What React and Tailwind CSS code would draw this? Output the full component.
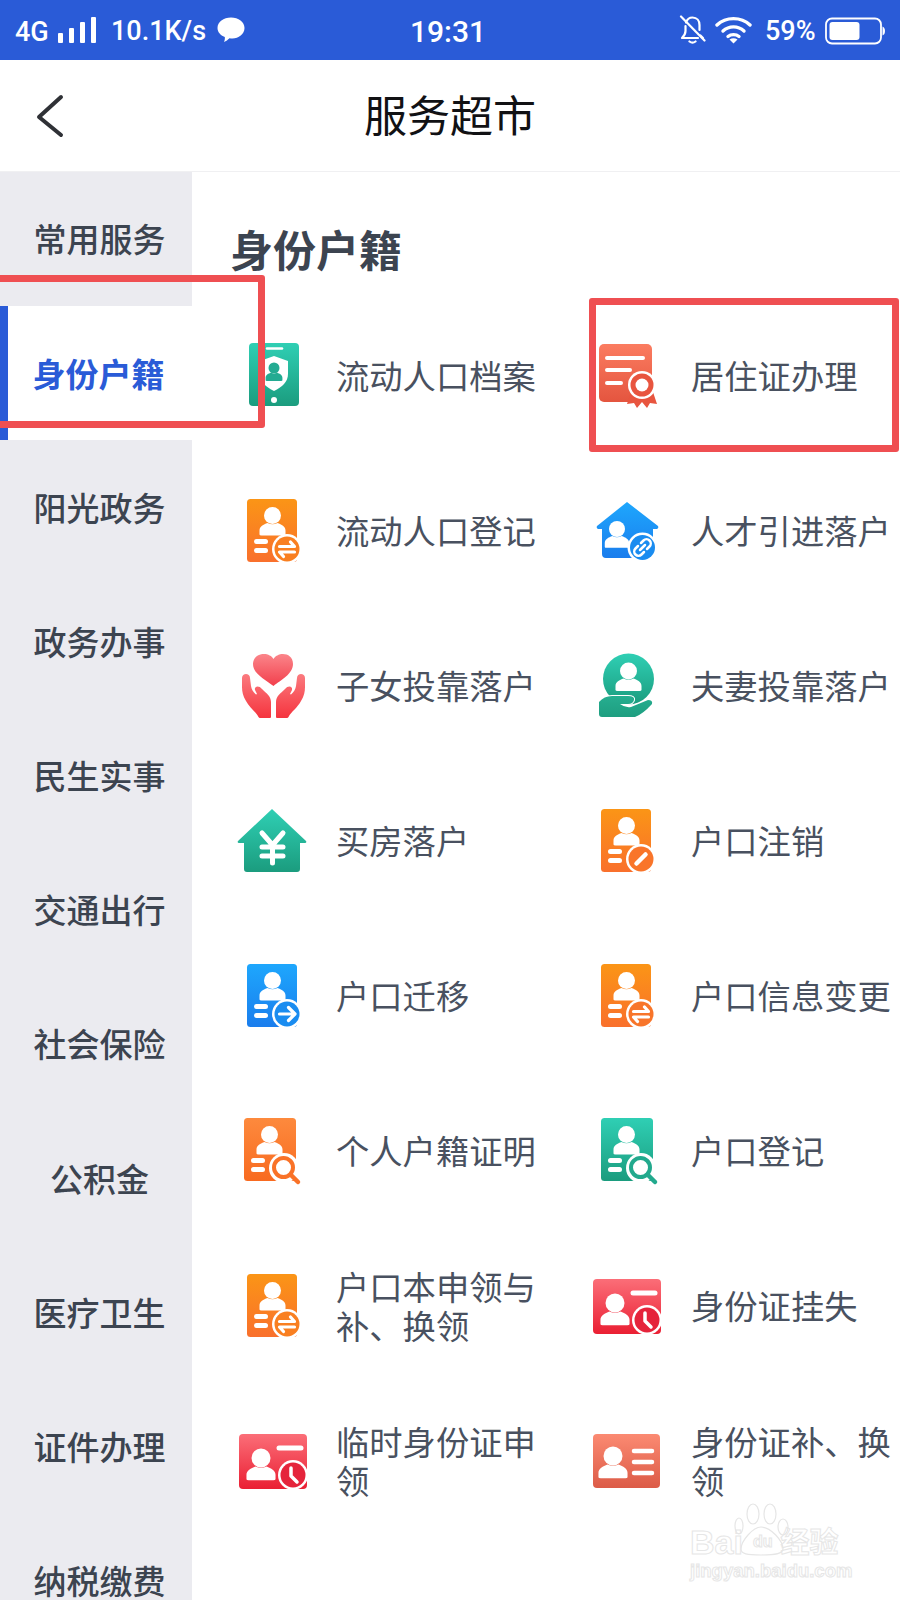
const sideItems = ['常用服务', '身份户籍', '阳光政务', '政务办事', '民生实事', '交通出行', '社会保险', '公积金', '医疗卫生', '证件办理', '纳税缴费'];

// head + shoulders used by most of the card icons
function Person({ x, y, r = 8.5, fill = 'white' }) {
  const k = r / 8.5;
  return (
    <g fill={fill} transform={`translate(${x} ${y}) scale(${k})`}>
      <circle cx="0" cy="0" r="8.5" />
      <path d="M-13 19v-4c0-4 4-6 8-7.500q5 2.500 10 0c4 1.500 8 3.500 8 7.500v4q0 1-2 1h-22q-2 0-2-1z" />
    </g>
  );
}

function Badge({ type, color, x = 51, y = 52 }) {
  if (type === 'search') {
    return (
      <g>
        <circle cx={x} cy={y} r="15" fill="white" />
        <circle cx={x - 0.500} cy={y - 0.500} r="9.500" fill="white" stroke={color} strokeWidth="4" />
        <path d={`M${x + 7} ${y + 7}L${x + 14} ${y + 14}`} stroke={color} strokeWidth="4.500" strokeLinecap="round" />
      </g>
    );
  }
  return (
    <g transform={`translate(${x} ${y})`}>
      <circle r="15" fill="white" />
      <circle r="12.500" fill={color} />
      {type === 'swap' && <path d="M-7.500 -2.500H7.500L3.500 -7M7.500 3H-7.500L-3.500 7.500" fill="none" stroke="white" strokeWidth="3.200" strokeLinecap="round" strokeLinejoin="round" />}
      {type === 'arrow' && <path d="M-7.500 0H7.500M1.500 -6.500L8 0L1.500 6.500" fill="none" stroke="white" strokeWidth="3.200" strokeLinecap="round" strokeLinejoin="round" />}
      {type === 'ban' && <path d="M-4.500 4.500L4.500 -4.500" stroke="white" strokeWidth="4.500" strokeLinecap="round" />}
      {type === 'clock' && <path d="M-2 -7V1L4 7" fill="none" stroke="white" strokeWidth="3.500" strokeLinecap="round" strokeLinejoin="round" />}
      {type === 'link' && <path d="M-1.500 -4.500L1 -7a3.500 3.500 0 0 1 6 6L4.500 1.500M1.500 4.500L-1 7a3.500 3.500 0 0 1 -6 -6L-4.500 -1.500M-2.500 2.500L2.500 -2.500" fill="none" stroke="white" strokeWidth="2.500" strokeLinecap="round" />}
    </g>
  );
}

function PersonCard({ grad, color, type, x = 11, y = 2, w = 50, h = 63 }) {
  return (
    <>
      <rect x={x} y={y} width={w} height={h} rx="3.500" fill={`url(#${grad})`} />
      <Person x={x + 25.500} y={y + 16.500} />
      <path d={`M${x + 9.500} ${y + 42.500}h9M${x + 9.500} ${y + 51.500}h9`} stroke="white" strokeWidth="5" strokeLinecap="round" />
      <Badge type={type} color={color} x={x + 40} y={y + 50} />
    </>
  );
}

function ClockCard({ x = 2 }) {
  return (
    <>
      <rect x={x} y="7" width="68" height="55" rx="4" fill="url(#red)" />
      <Person x={x + 22} y="31" r="9.500" />
      <path d={`M${x + 40} 21h22`} stroke="white" strokeWidth="5" strokeLinecap="round" />
      <Badge type="clock" color="#e5243b" x={x + 54} y="48" />
    </>
  );
}

function Icon({ name }) {
  let body = null;
  if (name === 'phone') {
    body = (
      <>
        <rect x="13" y="1" width="50" height="63" rx="4" fill="url(#teal)" />
        <path d="M31 6.500h15" stroke="white" strokeWidth="2.500" strokeLinecap="round" />
        <path d="M38 14l14 5v13c0 8-6 13-14 17c-8-4-14-9-14-17v-13z" fill="white" />
        <Person x="38" y="26" r="5.500" fill="#23ab92" />
        <circle cx="38" cy="58" r="3" fill="white" />
      </>
    );
  } else if (name === 'cert') {
    body = (
      <>
        <rect x="8" y="2" width="53" height="58" rx="5" fill="url(#coral)" />
        <path d="M16 16h36M16 28h23M16 41h14" stroke="white" strokeWidth="4" strokeLinecap="round" />
        <path d="M40 50L36 62L43 61L46 66L51 60L56 66L59 61L66 62L62 50Z" fill="#e8553f" />
        <circle cx="51" cy="43" r="14" fill="white" />
        <circle cx="51" cy="43" r="11.500" fill="#e8553f" />
        <circle cx="51" cy="43" r="6.500" fill="white" />
      </>
    );
  } else if (name === 'link') {
    body = (
      <>
        <path d="M36 5L67 29q1 2-1 3h-4v25q0 4-4 4h-43q-4 0-4-4v-25h-4q-2-1-1-3z" fill="url(#blue)" />
        <Person x="26" y="32" r="8" />
        <Badge type="link" color="#1a8cf0" x="51.500" y="50.500" />
      </>
    );
  } else if (name === 'hands') {
    body = (
      <>
        <path d="M37.500 34C30 28 17 22 17 12C17 5 23 2 28 2C32 2 36 4 37.500 7C39 4 43 2 47 2C52 2 57 5 57 12C57 22 45 28 37.500 34Z" fill="url(#heart)" />
        <path d="M6 26C6 20.500 14 20.500 14 26L15 34C15.500 37 17 40 20 42.500L21 42L19 38C18 34 23 33 26 37C30 41 35 44 35 50V65Q35 66 34 66H24Q23 66 22.500 65C20 60 13 55 10 49C7 44 6 40 6 35Z" fill="url(#hand-red)" />
        <path d="M6 26C6 20.500 14 20.500 14 26L15 34C15.500 37 17 40 20 42.500L21 42L19 38C18 34 23 33 26 37C30 41 35 44 35 50V65Q35 66 34 66H24Q23 66 22.500 65C20 60 13 55 10 49C7 44 6 40 6 35Z" fill="url(#hand-red)" transform="translate(75 0) scale(-1 1)" />
      </>
    );
  } else if (name === 'care') {
    body = (
      <>
        <circle cx="37.500" cy="27" r="25.500" fill="url(#teal)" />
        <Person x="37.500" y="19" r="8.500" />
        <path d="M8 50Q13 44 21 44H37Q44 44 43 48Q42 52 37 52H29Q34 56 40 55L57 48Q62 48 61 52Q52 62 44 65H11Q8 65 8 62Z" fill="url(#teal-dark)" stroke="white" strokeWidth="2" paintOrder="stroke" />
      </>
    );
  } else if (name === 'yuan') {
    body = (
      <>
        <path d="M36 2L70 34q1 2-1 2h-5v26q0 3-3 3h-50q-3 0-3-3v-26h-5q-2 0-1-2z" fill="url(#teal)" />
        <path d="M26 26L36.500 38L47 26M36.500 38V56M26 40H47M26 49H47" fill="none" stroke="white" strokeWidth="5" strokeLinecap="round" strokeLinejoin="round" />
      </>
    );
  } else if (name === 'idlines') {
    body = (
      <>
        <rect x="2" y="7" width="67" height="54" rx="4" fill="url(#salmon)" />
        <Person x="22" y="29" r="9.500" />
        <path d="M43 24h18M43 35h18M43 46h18" stroke="white" strokeWidth="4.500" strokeLinecap="round" />
      </>
    );
  } else if (name === 'clock1') {
    body = <ClockCard x={3} />;
  } else if (name === 'clock2') {
    body = <ClockCard x={2} />;
  } else if (name === 'swap') {
    body = <PersonCard grad="orange" color="#f97f20" type="swap" />;
  } else if (name === 'ban') {
    body = <PersonCard grad="orange" color="#f9752a" type="ban" x={10} />;
  } else if (name === 'swap2') {
    body = <PersonCard grad="orange" color="#f8752a" type="swap" x={10} />;
  } else if (name === 'arrow') {
    body = <PersonCard grad="blue" color="#1a8cf0" type="arrow" />;
  } else if (name === 'search-orange') {
    body = <PersonCard grad="orange2" color="#f97228" type="search" x={8} y={1} w={52} />;
  } else if (name === 'search-teal') {
    body = <PersonCard grad="teal" color="#22a98d" type="search" x={10} y={1} w={52} />;
  }
  return (
    <svg width="72" height="72" viewBox="0 0 72 72" className="shrink-0 overflow-visible">
      {body}
    </svg>
  );
}

const services = [
  ['phone', '流动人口档案'],
  ['cert', '居住证办理'],
  ['swap', '流动人口登记'],
  ['link', '人才引进落户'],
  ['hands', '子女投靠落户'],
  ['care', '夫妻投靠落户'],
  ['yuan', '买房落户'],
  ['ban', '户口注销'],
  ['arrow', '户口迁移'],
  ['swap2', '户口信息变更'],
  ['search-orange', '个人户籍证明'],
  ['search-teal', '户口登记'],
  ['swap', '户口本申领与补、换领'],
  ['clock2', '身份证挂失'],
  ['clock1', '临时身份证申领'],
  ['idlines', '身份证补、换领'],
];

function Gradient({ id, from, to }) {
  return (
    <linearGradient id={id} x1="0" y1="0" x2="0" y2="1">
      <stop offset="0" stopColor={from} />
      <stop offset="1" stopColor={to} />
    </linearGradient>
  );
}

function StatusBar() {
  return (
    <div className="h-[60px] bg-[#2a5bd7] flex items-center text-white text-[27px] font-medium font-['Roboto',sans-serif] pl-[15px]">
      <span className="w-[37px] pt-[4px]">4G</span>
      <svg width="38" height="26" viewBox="0 0 38 26" className="ml-[6px]" fill="white">
        <rect x="0" y="16" width="5" height="10" rx="1" />
        <rect x="11" y="11" width="5" height="15" rx="1" />
        <rect x="22" y="5" width="5" height="21" rx="1" />
        <rect x="33" y="0" width="5" height="26" rx="1" />
      </svg>
      <span className="ml-[15px] w-[96px] pt-[2px]">10.1K/s</span>
      <svg width="28" height="26" viewBox="0 0 28 26" className="ml-[10px]" fill="white">
        <path d="M14 0.500c7.500 0 13.500 4.500 13.500 10.500s-6 10.500-12 10.500c-1 0-2 0-3-.2c-1.500 1.500-3.500 3-5.500 3.700c.8-1.500 1-3.500.8-5c-4.500-1.800-7.300-5-7.300-9c0-6 6-10.500 13.500-10.500z" />
      </svg>
      <span className="ml-[165px] w-[82px] pt-[2px] text-[30px]">19:31</span>
      <svg width="27" height="30" viewBox="0 0 27 30" className="ml-[187px]" fill="none" stroke="white" strokeWidth="2.200" strokeLinecap="round" strokeLinejoin="round">
        <path d="M7 7.500C8 4.500 10.500 2.500 13.500 2.500C18 2.500 20.500 6 20.500 10V15" />
        <path d="M6.500 11V16C6.500 19 5 21 3 23H19" />
        <path d="M21.500 20.500L24 23" />
        <path d="M10.500 26.500Q13.500 28.800 16.500 26.500" />
        <path d="M2 1.500L25.500 25.500" />
      </svg>
      <svg width="37" height="28" viewBox="0 0 37 28" className="ml-[9px]" fill="none" stroke="white" strokeWidth="3.400" strokeLinecap="round">
        <path d="M2 9C11 0.500 26 0.500 35 9" />
        <path d="M8 15C14 9.500 23 9.500 29 15" />
        <path d="M13 20.500C16 18 21 18 24 20.500" />
        <path d="M18.500 27.500L14.500 23.500Q18.500 21 22.500 23.500Z" fill="white" stroke="none" />
      </svg>
      <span className="ml-[13px] w-[52px] pt-[2px]">59%</span>
      <svg width="60" height="28" viewBox="0 0 60 28" className="ml-[8px] mt-[1px]">
        <rect x="1" y="1.500" width="55" height="25" rx="6" fill="none" stroke="white" strokeWidth="1.800" />
        <rect x="4.500" y="5" width="30" height="18" rx="3" fill="white" />
        <path d="M57.500 9.500q2.500 1 2.500 4.500t-2.500 4.500z" fill="white" />
      </svg>
    </div>
  );
}

function Watermark() {
  return (
    <div className="absolute left-[690px] top-[1498px] w-[170px] text-transparent font-['Liberation_Sans',sans-serif] [-webkit-text-stroke:1px_#e6e6e6]">
      <svg width="60" height="56" viewBox="0 0 60 56" className="absolute left-[44px] top-[2px]" fill="none" stroke="#e6e6e6" strokeWidth="1.200">
        <ellipse cx="19" cy="14" rx="6" ry="10" />
        <ellipse cx="36" cy="14" rx="6" ry="10" />
        <ellipse cx="5" cy="26" rx="4" ry="8" />
        <ellipse cx="49" cy="27" rx="5" ry="8" />
        <path d="M27 27c-8 0-20 14-20 22c0 5 6 6 20 6s22-1 22-6c0-8-12-22-22-22z" />
      </svg>
      <div className="flex h-[32px] mt-[28px] text-[34px] leading-[32px] font-bold">
        <span>Bai</span>
        <span className="ml-[10px] mt-[4px] text-[16px] leading-[24px]">du</span>
        <span className="ml-[8px] text-[29px] leading-[28px] font-['Noto_Sans_CJK_SC',sans-serif]">经验</span>
      </div>
      <div className="text-[18.500px] leading-[22px] mt-[2px] font-bold">jingyan.baidu.com</div>
    </div>
  );
}

export default function App() {
  return (
    <div className="relative w-[900px] h-[1600px] overflow-hidden bg-white font-['Noto_Sans_CJK_SC',sans-serif]">
      <svg className="absolute w-0 h-0">
        <defs>
          <Gradient id="orange" from="#fb9516" to="#f9702c" />
          <Gradient id="orange2" from="#fd8a3d" to="#f86a20" />
          <Gradient id="blue" from="#1ea7fd" to="#1a7ded" />
          <Gradient id="teal" from="#2fcfb4" to="#1b9c7e" />
          <Gradient id="teal-dark" from="#26ae90" to="#1e9e80" />
          <Gradient id="red" from="#fb6e78" to="#ea1f33" />
          <Gradient id="coral" from="#fb7c60" to="#e4553f" />
          <Gradient id="salmon" from="#fb8a72" to="#dc5b47" />
          <Gradient id="heart" from="#fb858a" to="#f23f4c" />
          <Gradient id="hand-red" from="#fb7b7f" to="#f5343e" />
        </defs>
      </svg>

      <StatusBar />

      <div className="h-[112px] border-b border-[#f0f0f2] flex items-center justify-center relative">
        <svg width="28" height="44" viewBox="0 0 28 44" className="absolute left-[36px] top-[34px]" fill="none" stroke="#2f3136" strokeWidth="4" strokeLinecap="round" strokeLinejoin="round">
          <path d="M25 3L3 23L25 41" />
        </svg>
        <h1 className="text-[43px] font-normal text-[#111114] pb-[4px]">服务超市</h1>
      </div>

      <div className="flex">
        <div className="w-[192px] bg-[#ebebf0] shrink-0 h-[1428px]">
          {sideItems.map((item, i) => (
            <div
              key={item}
              className={i === 1
                ? 'h-[134.200px] flex items-center justify-center bg-white border-l-[8px] border-[#2a5bd7] pr-[3px] text-[33px] font-bold text-[#2a5bd7]'
                : 'h-[134.200px] flex items-center justify-center pl-[7px] text-[33px] font-medium text-[#3c4450]'}
            >
              {item}
            </div>
          ))}
        </div>

        <div className="pl-[44px] flex-1">
          <h2 className="mt-[50px] ml-[-6px] mb-[26px] text-[43px] leading-[52px] font-bold text-[#3c4450]">身份户籍</h2>
          <div className="grid grid-cols-[355px_1fr]">
            {services.map(([icon, label], i) => (
              <div key={label + i} className="h-[155px] flex items-center gap-[28px]">
                <Icon name={icon} />
                <span className="w-[201px] pb-[4px] text-[33.300px] leading-[38.500px] text-[#495160]">{label}</span>
              </div>
            ))}
          </div>
        </div>
      </div>

      <Watermark />

      {/* red marks drawn over the screenshot */}
      <div className="absolute left-[-10px] top-[275px] w-[275px] h-[153px] border-[7px] border-[#ef4f52] rounded-[3px]" />
      <div className="absolute left-[589px] top-[298px] w-[310px] h-[154px] border-[7px] border-[#ef4f52] rounded-[3px]" />
    </div>
  );
}
